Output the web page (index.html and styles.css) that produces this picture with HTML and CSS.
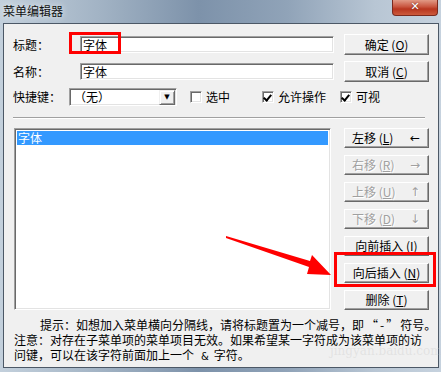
FILE: index.html
```html
<!DOCTYPE html>
<html lang="zh-CN">
<head>
    <meta charset="UTF-8">
    <title>菜单编辑器</title>
    <link rel="stylesheet" href="styles.css">
</head>
<body>
    <div class="window">
        <div class="titlebar">
            <span class="title">菜单编辑器</span>
            <div class="close">✕</div>
        </div>
        <div class="client">
            <div class="row">
                <label class="lbl">标题：</label>
                <div class="textbox">字体</div>
                <button class="btn main-btn">确定 (<u>O</u>)</button>
            </div>
            <div class="row row-gap">
                <label class="lbl">名称：</label>
                <div class="textbox">字体</div>
                <button class="btn main-btn">取消 (<u>C</u>)</button>
            </div>
            <div class="row row-opts">
                <label class="lbl short">快捷键：</label>
                <div class="combo">
                    <span>（无）</span>
                    <span class="drop">▼</span>
                </div>
                <span class="check first"></span><span class="check-text">选中</span>
                <span class="check on second"></span><span class="check-text">允许操作</span>
                <span class="check on third"></span><span class="check-text">可视</span>
            </div>
            <div class="separator"></div>
            <div class="middle">
                <div class="listbox">
                    <div class="list-item selected">字体</div>
                </div>
                <div class="side">
                    <button class="btn side-btn split"><span>左移 (<u>L</u>)</span><span class="arr">←</span></button>
                    <button class="btn side-btn split disabled"><span>右移 (<u>R</u>)</span><span class="arr">→</span></button>
                    <button class="btn side-btn split disabled"><span>上移 (<u>U</u>)</span><span class="arr">↑</span></button>
                    <button class="btn side-btn split disabled"><span>下移 (<u>D</u>)</span><span class="arr">↓</span></button>
                    <button class="btn side-btn">向前插入 (<u>I</u>)</button>
                    <button class="btn side-btn">向后插入 (<u>N</u>)</button>
                    <button class="btn side-btn">删除 (<u>T</u>)</button>
                </div>
            </div>
            <div class="hint">
                <div class="hint-first">提示：如想加入菜单横向分隔线，请将标题置为一个减号，即<span class="wide">“-”</span>符号。</div>
                <div>注意：对存在子菜单项的菜单项目无效。如果希望某一字符成为该菜单项的访</div>
                <div>问键，可以在该字符前面加上一个<span class="amp">&amp;</span>字符。</div>
            </div>
        </div>

        <!-- annotations drawn over the dialog -->
        <div class="mark mark-title"></div>
        <div class="mark mark-insert"></div>
        <svg class="pointer" width="441" height="372" viewBox="0 0 441 372">
            <polygon points="226,236 310,261 312,255 331,275 307,274 309,267 226,238" fill="#ff0000"/>
        </svg>
        <div class="watermark">jingyan.baidu.com</div>
    </div>
</body>
</html>
```
FILE: styles.css
```css
* {
    box-sizing: border-box;
}
body {
    margin: 0;
    font-family: "Noto Sans CJK SC", "DejaVu Sans", sans-serif;
    font-size: 12px;
    color: #000;
}
.window {
    position: relative;
    width: 441px;
    height: 372px;
    padding: 0 2px 4px 3px;
    background: linear-gradient(90deg, #c3d0dc 0%, #a3b4c5 22%, #7d92aa 45%, #90a3b8 65%, #b8c6d4 85%, #c6d2de 100%);
    overflow: hidden;
}
.titlebar {
    height: 23px;
    display: flex;
    align-items: center;
    justify-content: space-between;
}
.title {
    font-size: 12px;
    line-height: 14px;
    margin-top: -1px;
    color: #111;
    text-shadow: 0 0 6px rgba(255,255,255,0.9);
}
.close {
    align-self: flex-start;
    width: 46px;
    height: 16px;
    margin-right: 1px;
    border: 1px solid #7a2a1e;
    border-top: none;
    border-radius: 0 0 4px 4px;
    background: linear-gradient(#e19a86, #c9553f 45%, #b8361f 60%, #cc5a3c);
    color: #fff;
    font-family: "DejaVu Sans", sans-serif;
    font-weight: bold;
    font-size: 11px;
    line-height: 14px;
    text-align: center;
    text-shadow: 0 0 2px #5a1a10;
}
.client {
    height: 345px;
    border: 1px solid #4c5866;
    background-color: #f0f0f0;
    padding: 10px 0 0 9px;
}
.row {
    display: flex;
    align-items: center;
    height: 21px;
}
.row-gap {
    margin-top: 6px;
}
.row-opts {
    margin-top: 6px;
    height: 18px;
}
.lbl {
    width: 67px;
    line-height: 14px;
}
.lbl.short {
    width: 56px;
}
.textbox {
    width: 254px;
    height: 17px;
    background: #fff;
    border: 1px solid;
    border-color: #a0a0a0 #fff #fff #a0a0a0;
    box-shadow: inset 1px 1px #696969, inset -1px -1px #e3e3e3;
    padding: 1px 0 0 2px;
    line-height: 14px;
}
.btn {
    font-family: inherit;
    font-size: 12px;
    color: #000;
    background: #f0f0f0;
    border: 1px solid;
    border-color: #fff #696969 #696969 #fff;
    box-shadow: inset -1px -1px #a0a0a0;
    padding: 0;
    line-height: 14px;
    margin: 0;
}
.btn u {
    text-underline-offset: 1px;
}
.main-btn {
    width: 85px;
    height: 21px;
    margin-left: 10px;
}
.combo {
    width: 108px;
    height: 18px;
    display: flex;
    align-items: center;
    justify-content: space-between;
    background: #fff;
    border: 1px solid;
    border-color: #a0a0a0 #fff #fff #a0a0a0;
    box-shadow: inset 1px 1px #696969, inset -1px -1px #e3e3e3;
    padding: 0 1px 0 4px;
    line-height: 14px;
}
.drop {
    width: 16px;
    height: 15px;
    background: #f0f0f0;
    border: 1px solid;
    border-color: #f0f0f0 #696969 #696969 #f0f0f0;
    box-shadow: inset 1px 1px #fff, inset -1px -1px #a0a0a0;
    font-size: 7px;
    line-height: 13px;
    text-align: center;
    font-family: "DejaVu Sans", sans-serif;
}
.check {
    width: 12px;
    height: 12px;
    background: #fff;
    border: 1px solid;
    border-color: #a0a0a0 #fff #fff #a0a0a0;
    box-shadow: inset 1px 1px #696969, inset -1px -1px #e3e3e3;
    position: relative;
}
.check.first {
    margin-left: 13px;
}
.check.second {
    margin-left: 32px;
}
.check.third {
    margin-left: 14px;
}
.check.on::after {
    content: "";
    position: absolute;
    left: 2px;
    top: 1px;
    width: 3px;
    height: 6px;
    border: solid #000;
    border-width: 0 2px 2px 0;
    transform: rotate(40deg);
}
.check-text {
    margin-left: 4px;
    line-height: 14px;
}
.separator {
    width: 412px;
    margin-top: 11px;
    border-top: 1px solid #a0a0a0;
    border-bottom: 1px solid #fff;
}
.middle {
    display: flex;
    margin-top: 9px;
}
.listbox {
    width: 317px;
    height: 182px;
    margin-left: 1px;
    background: #fff;
    border: 1px solid;
    border-color: #a0a0a0 #fff #fff #a0a0a0;
    box-shadow: inset 1px 1px #696969, inset -1px -1px #e3e3e3;
    padding: 2px;
}
.list-item {
    height: 14px;
    line-height: 14px;
    padding-left: 1px;
}
.list-item.selected {
    background-color: #3399ff;
    color: #fff;
}
.side {
    display: flex;
    flex-direction: column;
    gap: 7px;
    margin-left: 13px;
}
.side-btn {
    width: 85px;
    height: 20px;
}
.split {
    display: flex;
    align-items: center;
    justify-content: space-between;
    padding: 0 8px 0 7px;
}
.arr {
    font-family: "DejaVu Sans", sans-serif;
    font-size: 12px;
}
.disabled {
    color: #a0a0a0;
    text-shadow: 1px 1px #fff;
}
.hint {
    margin-top: 7px;
    margin-left: 1px;
    line-height: 15px;
    white-space: nowrap;
}
.hint-first {
    text-indent: 26px;
}
.wide {
    letter-spacing: 2px;
    margin-left: 2px;
}
.amp {
    font-family: "DejaVu Sans", sans-serif;
    font-size: 10px;
    margin: 0 5px 0 7px;
}
.mark {
    position: absolute;
    border: 3px solid #ff0000;
}
.mark-title {
    left: 69px;
    top: 32px;
    width: 52px;
    height: 22px;
}
.mark-insert {
    left: 334px;
    top: 252px;
    width: 102px;
    height: 35px;
}
.pointer {
    position: absolute;
    left: 0;
    top: 0;
}
.watermark {
    position: absolute;
    left: 330px;
    top: 344px;
    color: rgba(200, 200, 200, 0.35);
    font-family: "DejaVu Serif", serif;
    font-size: 12px;
}
```
